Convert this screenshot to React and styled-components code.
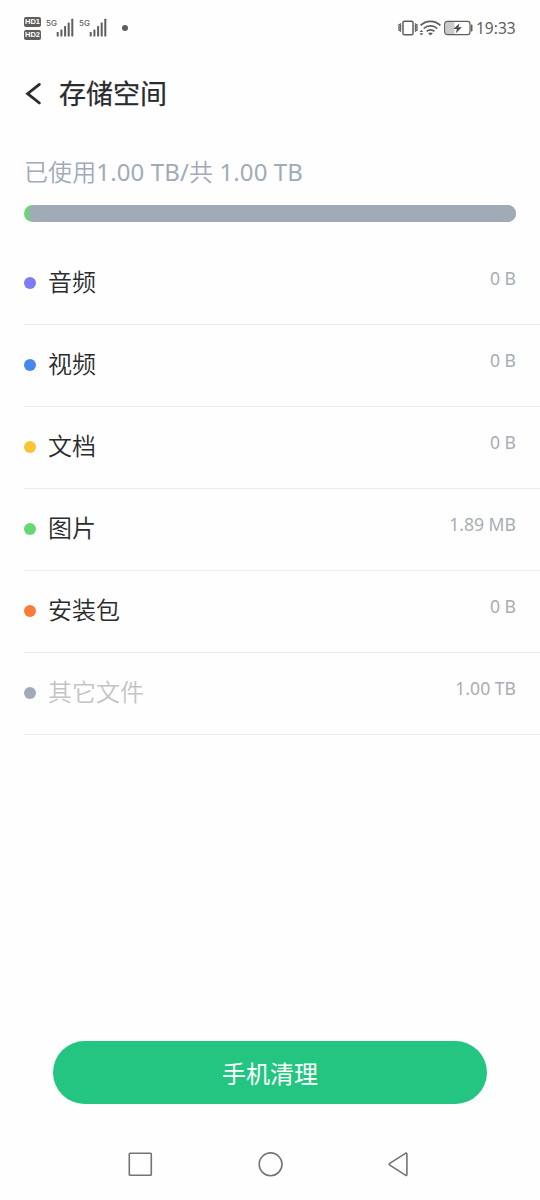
import styled, { createGlobalStyle } from "styled-components";

const GlobalStyle = createGlobalStyle`
  body {
    margin: 0;
    background-color: #fefefe;
    font-family: "Noto Sans", "Noto Sans CJK SC", sans-serif;
  }
`;

const Container = styled.div`
  width: 540px;
  height: 1200px;
  display: flex;
  flex-direction: column;
  overflow: hidden;
  background-color: #fefefe;
  color: #292b2e;
`;

const StatusBar = styled.div`
  height: 56px;
  padding: 0 24px;
  display: flex;
  align-items: center;
  justify-content: space-between;
  box-sizing: border-box;
`;

const StatusGroup = styled.div`
  display: flex;
  align-items: center;
`;

const Badges = styled.div`
  display: flex;
  flex-direction: column;
  gap: 3px;
  margin-right: 5px;
`;

const Badge = styled.span`
  width: 17px;
  height: 10px;
  border-radius: 2px;
  background-color: #5e5e5e;
  color: #fff;
  font-family: "Liberation Sans", sans-serif;
  font-size: 7.5px;
  font-weight: 700;
  line-height: 10px;
  text-align: center;
`;

const Signal = styled.svg`
  width: 28px;
  height: 20px;
  margin-right: 5px;
`;

const Dot = styled.span`
  width: ${(props) => props.$size}px;
  height: ${(props) => props.$size}px;
  flex: none;
  border-radius: 50%;
  background-color: ${(props) => props.$color};
`;

const NoticeDot = styled(Dot)`
  margin-left: 10px;
`;

const Time = styled.span`
  width: 40px;
  margin-left: 3px;
  color: #5e5e5e;
  font-size: 15.5px;
  line-height: 20px;
  white-space: nowrap;
`;

const Header = styled.header`
  height: 76px;
  padding-left: 24px;
  display: flex;
  align-items: center;
  box-sizing: border-box;
`;

const Title = styled.h1`
  margin: 0 0 1px 16px;
  font-size: 27px;
  font-weight: 400;
  line-height: 40px;
  -webkit-text-stroke: 0.25px #292b2e;
`;

const Usage = styled.section`
  padding: 22px 24px 0;
`;

const UsageText = styled.div`
  height: 36px;
  color: #a1abb7;
  font-size: 24px;
  letter-spacing: 0.11px;
  line-height: 36px;
  white-space: nowrap;
`;

const Label = styled.span`
  font-weight: 350;
`;

const Track = styled.div`
  height: 17px;
  margin-top: 15px;
  display: flex;
  border-radius: 9px;
  overflow: hidden;
  background-color: #6fd37c;
`;

const Segment = styled.div`
  flex: 1;
  height: 17px;
  margin-left: 5px;
  border-radius: 5px 0 0 5px / 9px 0 0 9px;
  background-color: #a1abb7;
`;

const List = styled.ul`
  margin: 21px 0 0 24px;
  padding: 0;
  list-style: none;
`;

const Row = styled.li`
  height: 82px;
  padding: 0 24px 2px 0;
  display: flex;
  align-items: center;
  box-sizing: border-box;
  border-bottom: 1px solid #ececec;
`;

const Name = styled(Label)`
  flex: 1;
  margin: 0 0 1px 12px;
  color: ${(props) => (props.$disabled ? "#c4c4c4" : "#292b2e")};
  font-size: 24px;
  line-height: 36px;
`;

const Size = styled.span`
  margin-bottom: 9px;
  color: #a8aeb5;
  font-size: 17.6px;
  line-height: 24px;
`;

const Button = styled.button`
  width: 434px;
  height: 63px;
  margin: auto auto 0;
  padding: 0 0 1px;
  border: none;
  border-radius: 32px;
  background-color: #23c581;
  color: #fff;
  font-family: inherit;
  font-size: 24px;
  cursor: pointer;
`;

const NavBar = styled.nav`
  height: 96px;
  padding: 46px 127px 0 127px;
  display: flex;
  align-items: flex-start;
  justify-content: space-between;
  box-sizing: border-box;
`;

const files = [
  { name: "音频", size: "0 B", color: "#7c7cf3" },
  { name: "视频", size: "0 B", color: "#4788ed" },
  { name: "文档", size: "0 B", color: "#fac532" },
  { name: "图片", size: "1.89 MB", color: "#65d873" },
  { name: "安装包", size: "0 B", color: "#fb7c3a" },
  { name: "其它文件", size: "1.00 TB", color: "#a1abb7", disabled: true },
];

const SignalIcon = () => (
  <Signal viewBox="0 0 28 20" fill="#5e5e5e">
    <text x="0" y="7.5" fontFamily="Inter, sans-serif" fontSize="8" fontWeight="500">5G</text>
    <rect x="10.7" y="14" width="2" height="4.5" rx="0.5" />
    <rect x="14.4" y="11.5" width="2" height="7" rx="0.5" />
    <rect x="18.1" y="8" width="2" height="10.5" rx="0.5" />
    <rect x="21.7" y="4.5" width="2" height="14" rx="0.5" />
    <rect x="25.3" y="0.8" width="2" height="17.7" rx="0.5" />
  </Signal>
);

const VibrateIcon = () => (
  <svg width="20" height="16" viewBox="0 0 20 16" fill="none" stroke="#5e5e5e">
    <rect x="5" y="1.2" width="10" height="13.6" rx="1.4" strokeWidth="1.5" />
    <path d="M2.9 3.4l-.8 1.4.8 1.4-.8 1.4.8 1.4-.8 1.4.8 1.4M.8 4l.4 1-.4 1.2.4 1.2-.4 1.2.4 1.2-.4 1.2M17.1 3.4l.8 1.4-.8 1.4.8 1.4-.8 1.4.8 1.4-.8 1.4M19.2 4l-.4 1 .4 1.2-.4 1.2.4 1.2-.4 1.2.4 1.2" strokeWidth="1.2" />
  </svg>
);

const WifiIcon = () => (
  <svg width="24" height="18" viewBox="0 0 24 18" fill="none" stroke="#5e5e5e" strokeWidth="1.7">
    <path d="M2.6 6.4a14 14 0 0 1 19.8 0M5.7 9.5a9.9 9.9 0 0 1 13.6 0M8.6 12.4a5.6 5.6 0 0 1 7.8 0" />
    <path d="M10.1 14.3q2.4-1.8 4.8 0L12.5 16.6z" fill="#5e5e5e" stroke="none" />
    <path d="M1.5 13L3.4 10.9 5.3 13zM1.5 14.3L3.4 16.4l1.9-2.1z" fill="#5e5e5e" stroke="none" />
  </svg>
);

const BatteryIcon = () => (
  <svg width="31" height="16" viewBox="-1.5 0 31 16">
    <rect x="2" y="2" width="9" height="12" rx="1" fill="#cbcbcb" />
    <rect x="1.2" y="1.3" width="25.3" height="13.4" rx="2.6" fill="none" stroke="#5e5e5e" strokeWidth="1.2" />
    <path d="M27.3 4.5h.6q1.1 0 1.1 1.1v4.8q0 1.1-1.1 1.1h-.6z" fill="#5e5e5e" />
    <path d="M16 3.2L9.9 9h3.5l-1.1 4.2L18.4 7.3h-3.5z" fill="#4e4e4e" />
  </svg>
);

const App = () => {
  return (
    <>
      <GlobalStyle />
      <Container>
        <StatusBar>
          <StatusGroup>
            <Badges>
              <Badge>HD1</Badge>
              <Badge>HD2</Badge>
            </Badges>
            <SignalIcon />
            <SignalIcon />
            <NoticeDot $size={6} $color="#5e5e5e" />
          </StatusGroup>
          <StatusGroup>
            <VibrateIcon />
            <WifiIcon />
            <BatteryIcon />
            <Time>19:33</Time>
          </StatusGroup>
        </StatusBar>

        <Header>
          <svg width="19" height="24" viewBox="0 0 19 24" fill="none" stroke="#292b2e" strokeWidth="2.8">
            <path d="M15.4 2.4L3.6 11.7L15.4 21" strokeLinecap="round" strokeLinejoin="miter" />
          </svg>
          <Title>存储空间</Title>
        </Header>

        <Usage>
          <UsageText>
            <Label>已使用</Label>1.00 TB/<Label>共</Label> 1.00 TB
          </UsageText>
          <Track>
            <Segment />
          </Track>
        </Usage>

        <List>
          {files.map((file) => (
            <Row key={file.name}>
              <Dot $size={12} $color={file.color} />
              <Name $disabled={file.disabled}>{file.name}</Name>
              <Size>{file.size}</Size>
            </Row>
          ))}
        </List>

        <Button>手机清理</Button>

        <NavBar>
          <svg width="27" height="28" viewBox="0 0 27 28" fill="none" stroke="#737373" strokeWidth="1.6">
            <rect x="2.3" y="3.3" width="22" height="22" rx="0.8" />
          </svg>
          <svg width="27" height="28" viewBox="0 0 27 28" fill="none" stroke="#737373" strokeWidth="1.6">
            <circle cx="13.6" cy="14.3" r="11.4" />
          </svg>
          <svg width="27" height="28" viewBox="0 0 27 28" fill="none" stroke="#737373" strokeWidth="1.6" strokeLinejoin="round">
            <path d="M3.8 13.3L19.4 3.3Q20.9 2.6 20.9 4.2V24.4Q20.9 26 19.4 25.2L3.8 15.2Q2.5 14.3 3.8 13.3z" />
          </svg>
        </NavBar>
      </Container>
    </>
  );
};

export default App;
